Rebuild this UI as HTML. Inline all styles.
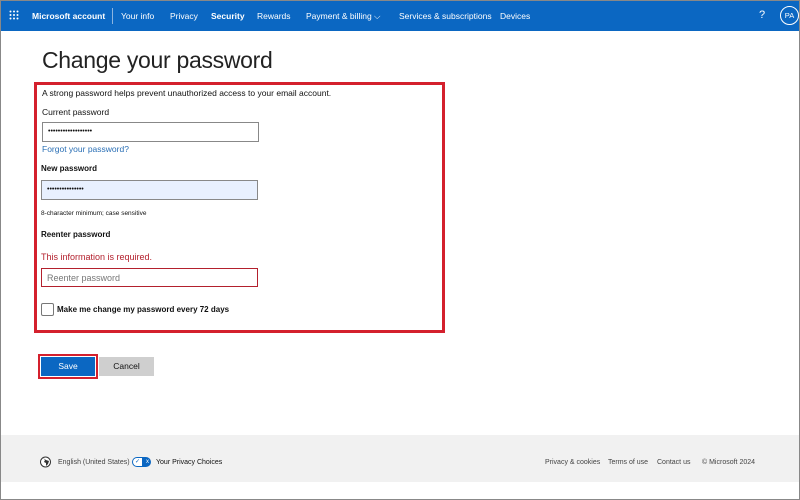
<!DOCTYPE html>
<html><head><meta charset="utf-8"><style>
*{box-sizing:border-box;margin:0;padding:0}
body{width:800px;height:500px;overflow:hidden;background:#fff;font-family:"Liberation Sans",sans-serif;position:relative;color:#111}
.frame{position:absolute;left:0;top:0;width:800px;height:500px;border:1px solid #888;pointer-events:none;z-index:5}
.nav{position:absolute;left:0;top:0;width:800px;height:31px;background:#0b67c2;color:#fff;font-size:8.5px}
.nav span{position:absolute;top:11px;white-space:nowrap}
.abs{position:absolute;white-space:nowrap}
.inp{position:absolute;height:20px;border:1px solid #888;background:#fff;font-size:9px;padding:4px 5px}
.foot{position:absolute;left:0;top:435px;width:800px;height:47px;background:#f1f1f1;font-size:7px;color:#444}
</style></head><body>
<div class="nav">
<svg class="abs" style="left:9px;top:10px" width="10" height="10" viewBox="0 0 10 10" fill="#fff"><circle cx="1.5" cy="1.5" r="1"/><circle cx="5" cy="1.5" r="1"/><circle cx="8.5" cy="1.5" r="1"/><circle cx="1.5" cy="5" r="1"/><circle cx="5" cy="5" r="1"/><circle cx="8.5" cy="5" r="1"/><circle cx="1.5" cy="8.5" r="1"/><circle cx="5" cy="8.5" r="1"/><circle cx="8.5" cy="8.5" r="1"/></svg>
<span style="left:32px;font-weight:bold;font-size:8.5px;top:11px">Microsoft account</span>
<div class="abs" style="left:112px;top:8px;width:1px;height:16px;background:#8bb4e0"></div>
<span style="left:121px">Your info</span>
<span style="left:170px">Privacy</span>
<span style="left:211px;font-weight:bold">Security</span>
<span style="left:257px">Rewards</span>
<span style="left:306px">Payment &amp; billing ⌵</span>
<span style="left:399px">Services &amp; subscriptions</span>
<span style="left:500px">Devices</span>
<span style="left:759px;font-size:11px;top:9px">?</span>
<div class="abs" style="left:780px;top:6px;width:19px;height:19px;border:1px solid #fff;border-radius:50%;font-size:7.5px;text-align:center;line-height:17px">PA</div>
</div>
<div class="abs" style="left:42px;top:47px;font-size:23px;color:#222;letter-spacing:-0.3px">Change your password</div>
<div class="abs" style="left:34px;top:82px;width:411px;height:251px;border:3px solid #d4202d"></div>
<div class="abs" style="left:42px;top:88px;font-size:8.5px">A strong password helps prevent unauthorized access to your email account.</div>
<div class="abs" style="left:42px;top:107px;font-size:8.5px">Current password</div>
<div class="inp" style="left:42px;top:122px;width:217px;font-size:7px;padding-top:5px">••••••••••••••••••</div>
<div class="abs" style="left:42px;top:144px;font-size:8.5px;color:#2a6fb5">Forgot your password?</div>
<div class="abs" style="left:41px;top:164px;font-size:8px;font-weight:bold">New password</div>
<div class="inp" style="left:41px;top:180px;width:217px;background:#e8f0fe;font-size:7px;padding-top:5px">•••••••••••••••</div>
<div class="abs" style="left:41px;top:210px;font-size:6.5px">8-character minimum; case sensitive</div>
<div class="abs" style="left:41px;top:230px;font-size:8px;font-weight:bold">Reenter password</div>
<div class="abs" style="left:41px;top:252px;font-size:9px;color:#b3202d">This information is required.</div>
<div class="inp" style="left:41px;top:268px;width:217px;height:19px;border-color:#b3202d;color:#777;padding-top:4px">Reenter password</div>
<div class="abs" style="left:41px;top:303px;width:13px;height:13px;border:1px solid #777;border-radius:2px"></div>
<div class="abs" style="left:57px;top:305px;font-size:8px;font-weight:bold">Make me change my password every 72 days</div>
<div class="abs" style="left:38px;top:354px;width:60px;height:25px;border:2px solid #d4202d"></div>
<div class="abs" style="left:41px;top:357px;width:54px;height:19px;background:#0b67c2;color:#fff;font-size:8.5px;text-align:center;line-height:19px">Save</div>
<div class="abs" style="left:99px;top:357px;width:55px;height:19px;background:#cfcfcf;font-size:8.5px;text-align:center;line-height:19px">Cancel</div>
<div class="foot">
<svg class="abs" style="left:40px;top:21px" width="11" height="12" viewBox="0 0 11 12"><circle cx="5.5" cy="6" r="5" fill="#fff" stroke="#333"/><path d="M3 2l2 2-1 2 2 1 0 3 2-2 1-3-3-1z" fill="#333"/></svg>
<span class="abs" style="left:58px;top:24px">English (United States)</span>
<div class="abs" style="left:132px;top:22px;width:19px;height:10px;border-radius:5px;background:#0b67c2;border:1px solid #0b67c2"><div style="position:absolute;left:0;top:0;width:9px;height:8px;background:#fff;border-radius:4px 0 0 4px;font-size:6px;color:#0b67c2;text-align:center;line-height:8px">✓</div><div style="position:absolute;right:1px;top:0;font-size:6px;color:#fff;line-height:8px">x</div></div>
<span class="abs" style="left:156px;top:24px;color:#111">Your Privacy Choices</span>
<span class="abs" style="left:545px;top:24px">Privacy &amp; cookies</span>
<span class="abs" style="left:608px;top:24px">Terms of use</span>
<span class="abs" style="left:657px;top:24px">Contact us</span>
<span class="abs" style="left:702px;top:24px">© Microsoft 2024</span>
</div>
<div class="frame"></div>
</body></html>
